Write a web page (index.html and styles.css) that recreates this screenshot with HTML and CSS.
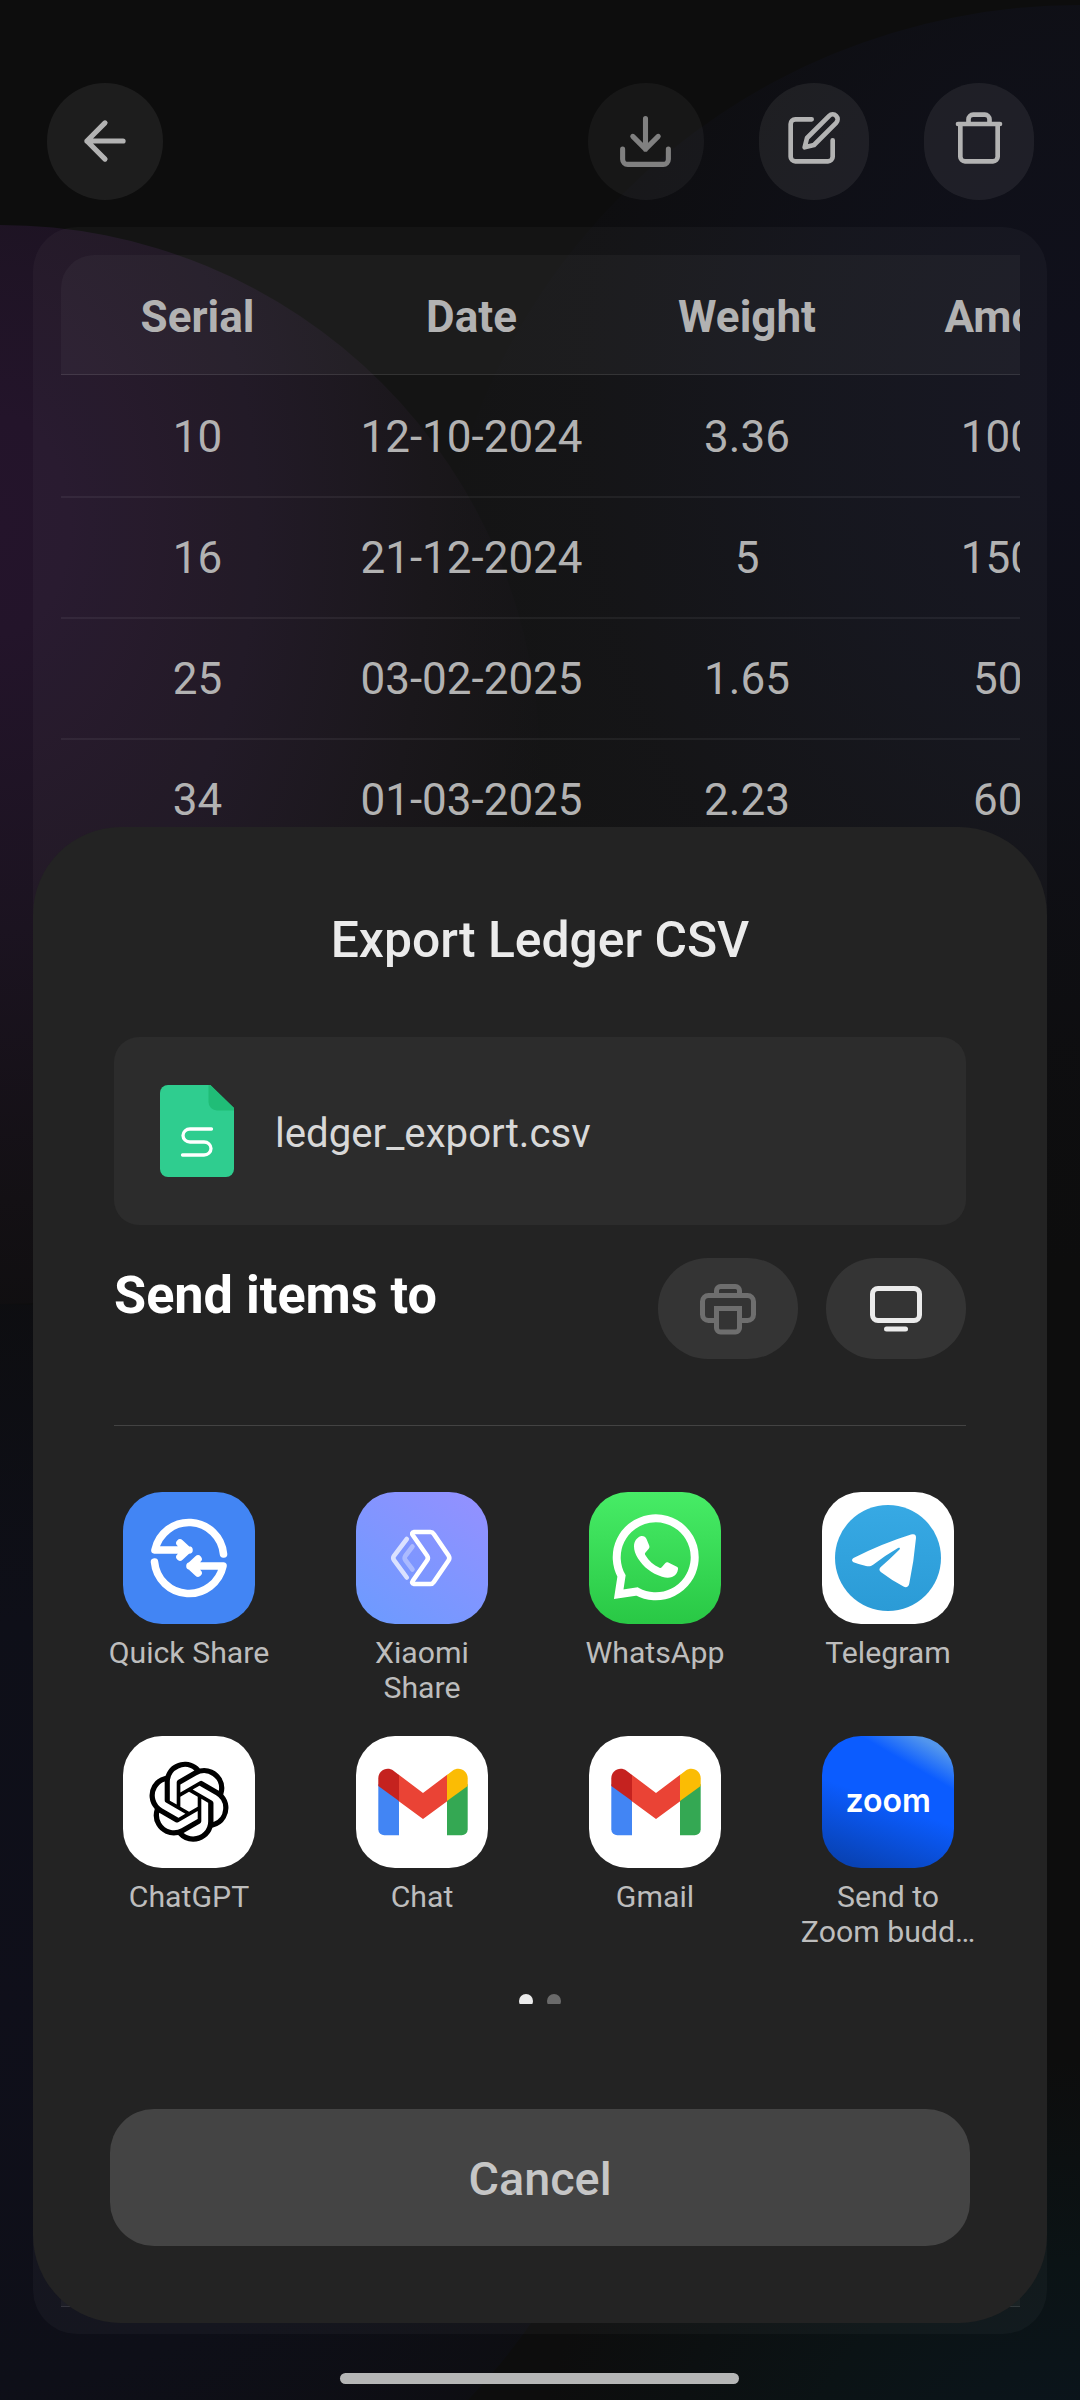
FILE: index.html
```html
<!DOCTYPE html>
<html lang="en">
<head>
<meta charset="utf-8">
<title>Export Ledger CSV</title>
<link rel="stylesheet" href="styles.css">
</head>
<body>
<div class="screen">
  <div class="glow glow-purple"></div>
  <div class="glow glow-blue"></div>
  <div class="glow glow-indigo"></div>
  <div class="glow glow-teal"></div>

  <header class="toolbar">
    <button class="round back" aria-label="Back">
      <svg width="62" height="62" viewBox="0 0 24 24"><path d="M19 12H5M12 19l-7-7 7-7"/></svg>
    </button>
    <button class="round download" aria-label="Download">
      <svg width="61" height="61" viewBox="0 0 24 24"><path d="M21 15v4a2 2 0 0 1-2 2H5a2 2 0 0 1-2-2v-4M7 10l5 5 5-5M12 15V3"/></svg>
    </button>
    <button class="round narrow" aria-label="Edit">
      <svg width="56" height="56" viewBox="0 0 24 24"><path d="M11 4H4a2 2 0 0 0-2 2v14a2 2 0 0 0 2 2h14a2 2 0 0 0 2-2v-7"/><path d="M18.500 2.500a2.121 2.121 0 0 1 3 3L12 15l-4 1 1-4 9.500-9.500z"/></svg>
    </button>
    <button class="round narrow" aria-label="Delete">
      <svg width="56" height="56" viewBox="0 0 24 24"><path d="M3 6h18M20 6v14a2 2 0 0 1-2 2H6a2 2 0 0 1-2-2V6M7.500 6V4a2 2 0 0 1 2-2h5a2 2 0 0 1 2 2v2"/></svg>
    </button>
  </header>

  <main class="card">
    <div class="table">
      <div class="row head"><span>Serial</span><span>Date</span><span>Weight</span><span>Amount</span></div>
      <div class="row"><span>10</span><span>12-10-2024</span><span>3.36</span><span>10000</span></div>
      <div class="row"><span>16</span><span>21-12-2024</span><span>5</span><span>15000</span></div>
      <div class="row"><span>25</span><span>03-02-2025</span><span>1.65</span><span>5000</span></div>
      <div class="row"><span>34</span><span>01-03-2025</span><span>2.23</span><span>6000</span></div>
      <div class="foot"></div>
    </div>
  </main>

  <section class="sheet">
    <h1 class="title">Export Ledger CSV</h1>
    <div class="file">
      <svg width="74" height="92" viewBox="0 0 74 92">
        <path d="M8 0H50L74 23V84a8 8 0 0 1-8 8H8a8 8 0 0 1-8-8V8a8 8 0 0 1 8-8z" fill="#2fcd8f"/>
        <path d="M48.500 0H50.500L74 23V25.500H57a8.500 8.500 0 0 1-8.500-8.500z" fill="#20bd77"/>
        <path d="M51.500 44H30a7 6.500 0 0 0 0 13H44a7 6.500 0 0 1 0 13H22.500" fill="none" stroke="#fff" stroke-width="3.300" stroke-linecap="round"/>
      </svg>
      <span class="file-name">ledger_export.csv</span>
    </div>
    <div class="send">
      <h2 class="send-title">Send items to</h2>
      <button class="pill" aria-label="Print">
        <svg width="56" height="52" viewBox="0 0 56 52" fill="none" stroke="#6e6e6e" stroke-width="5">
          <path d="M16.500 12V7.500a4 4 0 0 1 4-4h15a4 4 0 0 1 4 4V12"/>
          <path d="M14 37.500H8.500a6 6 0 0 1-6-6v-13a6 6 0 0 1 6-6h39a6 6 0 0 1 6 6v13a6 6 0 0 1-6 6H42"/>
          <path d="M16.500 25.500h23V45a4 4 0 0 1-4 4h-15a4 4 0 0 1-4-4z"/>
        </svg>
      </button>
      <button class="pill" aria-label="Cast to screen">
        <svg width="52" height="46" viewBox="0 0 52 46" fill="none" stroke="#ebebeb" stroke-width="5">
          <rect x="2.500" y="2.500" width="47" height="32" rx="5.500"/>
          <path d="M16.500 43h19" stroke-linecap="round"/>
        </svg>
      </button>
    </div>

    <div class="apps">
      <div class="app">
        <svg class="icon quick" viewBox="0 0 132 132" fill="none" stroke="#fff" stroke-width="7.600" stroke-linecap="round" stroke-linejoin="round">
          <path d="M100.500 62A34.700 34.700 0 0 0 32 58H66M57 51L64.500 58L57 65"/>
          <path d="M31.500 70A34.700 34.700 0 0 0 100 74H67M75 67L67.500 74L75 81"/>
        </svg>
        <span class="label">Quick Share</span>
      </div>
      <div class="app">
        <svg class="icon xiaomi" viewBox="0 0 132 132" fill="none" stroke="#fff" stroke-width="4.600" stroke-linecap="round" stroke-linejoin="round">
          <path d="M58 40H74.500Q76.500 40 77.800 42L92.500 63.500Q94.200 66 92.500 68.500L77.800 90Q76.500 92 74.500 92H58Q55 91.500 57 88.500L71 68.500Q72.800 66 71 63.500L57 43.500Q55 40.500 58 40z"/>
          <path d="M50.800 47L38 63.800Q36.500 66 38 68.200L50.800 85.500" opacity=".72"/>
          <path d="M56.500 54.500L49.300 64Q48 66 49.300 68L56.500 77.500" opacity=".35"/>
        </svg>
        <span class="label">Xiaomi Share</span>
      </div>
      <div class="app">
        <svg class="icon whatsapp" viewBox="0 0 132 132">
          <path d="M32.500 84A39 39 0 1 1 48 99.500L29.700 102.300z" fill="none" stroke="#fff" stroke-width="8"/>
          <path d="M45 54.500C45 49 48 45.500 51.500 44.200C54.500 43.700 56.500 44.700 57.500 47L60.200 53.500C60.700 55 60.400 56 59.500 57L56.500 60.500C55.700 61.500 55.800 62.200 56.300 63C60 69 64.500 73.200 70.500 75.800C71.500 76.200 72.100 76 72.700 75.300L76.200 71.200C77 70.200 78 70 79.300 70.500L87.300 74.500C88.800 75.200 89.200 75.800 89 77.300C88.600 81 86.500 83.500 83 85C80 86 77 86 73 84.700C62.500 81.500 54.500 75 49 66.500C46.300 62.300 45 58 45 54.500z" fill="#fff"/>
        </svg>
        <span class="label">WhatsApp</span>
      </div>
      <div class="app">
        <svg class="icon telegram" viewBox="0 0 132 132">
          <defs><linearGradient id="tg" x1="0" y1="0" x2="0" y2="1"><stop offset="0" stop-color="#37a9e4"/><stop offset="1" stop-color="#2b9bd6"/></linearGradient></defs>
          <circle cx="66" cy="66" r="53" fill="url(#tg)"/>
          <path d="M31.500 66Q60 51.500 89 42.500C92.500 41.500 94.300 42.500 94 46Q92 69 87.300 91.500C86.500 95 84.300 96.200 81.500 94.600Q70 88.500 58.800 80C57 78.500 57 77 58.500 75.300Q68 67 77.500 57.500C78.500 56 77.500 55.300 76 56Q63 63.500 51.500 72.500C49 74.500 46.500 74.600 44 74Q37 72.500 31.500 70.300C29.500 69.300 29.500 67.200 31.500 66z" fill="#fff"/>
        </svg>
        <span class="label">Telegram</span>
      </div>
      <div class="app">
        <svg class="icon" viewBox="0 0 132 132">
          <path transform="translate(26 25.700) scale(3.333)" d="M22.2819 9.8211a5.9847 5.9847 0 0 0-.5157-4.9108 6.0462 6.0462 0 0 0-6.5098-2.9A6.0651 6.0651 0 0 0 4.9807 4.1818a5.9847 5.9847 0 0 0-3.9977 2.9 6.0462 6.0462 0 0 0 .7427 7.0966 5.98 5.98 0 0 0 .511 4.9107 6.051 6.051 0 0 0 6.5146 2.9001A5.9847 5.9847 0 0 0 13.2599 24a6.0557 6.0557 0 0 0 5.7718-4.2058 5.9894 5.9894 0 0 0 3.9977-2.9001 6.0557 6.0557 0 0 0-.7475-7.0729zm-9.022 12.6081a4.4755 4.4755 0 0 1-2.8764-1.0408l.1419-.0804 4.7783-2.7582a.7948.7948 0 0 0 .3927-.6813v-6.7369l2.02 1.1686a.071.071 0 0 1 .038.052v5.5826a4.504 4.504 0 0 1-4.4945 4.4944zm-9.6607-4.1254a4.4708 4.4708 0 0 1-.5346-3.0137l.142.0852 4.783 2.7582a.7712.7712 0 0 0 .7806 0l5.8428-3.3685v2.3324a.0804.0804 0 0 1-.0332.0615L9.74 19.9502a4.4992 4.4992 0 0 1-6.1408-1.6464zM2.3408 7.8956a4.485 4.485 0 0 1 2.3655-1.9728V11.6a.7664.7664 0 0 0 .3879.6765l5.8144 3.3543-2.0201 1.1685a.0757.0757 0 0 1-.071 0l-4.8303-2.7865A4.504 4.504 0 0 1 2.3408 7.872zm16.5963 3.8558L13.1038 8.364 15.1192 7.2a.0757.0757 0 0 1 .071 0l4.8303 2.7913a4.4944 4.4944 0 0 1-.6765 8.1042v-5.6772a.79.79 0 0 0-.407-.667zm2.0107-3.0231l-.142-.0852-4.7735-2.7818a.7759.7759 0 0 0-.7854 0L9.409 9.2297V6.8974a.0662.0662 0 0 1 .0284-.0615l4.8303-2.7866a4.4992 4.4992 0 0 1 6.6802 4.66zM8.3065 12.863l-2.02-1.1638a.0804.0804 0 0 1-.038-.0567V6.0742a4.4992 4.4992 0 0 1 7.3757-3.4537l-.142.0805L8.704 5.459a.7948.7948 0 0 0-.3927.6813zm1.0976-2.3654l2.602-1.4998 2.6069 1.4998v2.9994l-2.5974 1.4997-2.6067-1.4997Z"/>
        </svg>
        <span class="label">ChatGPT</span>
      </div>
      <div class="app">
        <svg class="icon" viewBox="0 0 132 132">
          <g id="gmail">
            <path d="M22.300 48L43 62V99.300H28.300a6 6 0 0 1-6-6z" fill="#4285f4"/>
            <path d="M111.700 48L91 62V99.300H105.700a6 6 0 0 0 6-6z" fill="#34a853"/>
            <path d="M42.500 38.500L67 57L91.500 38.500V65L67 83L42.500 65z" fill="#ea4335"/>
            <path d="M43 38.900L37.500 34.800C31 30 22.300 34.500 22.300 42.300V50L43 65z" fill="#c5221f"/>
            <path d="M91 38.900L96.500 34.800C103 30 111.700 34.500 111.700 42.300V50L91 65z" fill="#fbbc04"/>
          </g>
        </svg>
        <span class="label">Chat</span>
      </div>
      <div class="app">
        <svg class="icon" viewBox="0 0 132 132"><use href="#gmail"/></svg>
        <span class="label">Gmail</span>
      </div>
      <div class="app">
        <svg class="icon zoom" viewBox="0 0 132 132"><text class="zoom-mark" x="23.500" y="75.500" textLength="85.500" lengthAdjust="spacingAndGlyphs">zoom</text></svg>
        <span class="label">Send to<br>Zoom budd…</span>
      </div>
    </div>

    <div class="dots"><i class="dot active"></i><i class="dot"></i></div>
    <button class="cancel">Cancel</button>
  </section>
  <div class="home-bar"></div>
</div>
</body>
</html>
```
FILE: styles.css
```css
* { box-sizing: border-box; }

body {
  margin: 0;
  background: #0d0d0d;
  font-family: Roboto, "Liberation Sans", sans-serif;
}

button {
  border: 0;
  padding: 0;
  font: inherit;
}

.screen {
  position: relative;
  width: 1080px;
  height: 2400px;
  overflow: hidden;
  background: #0d0d0d;
}

/* coloured background blobs */
.glow {
  position: absolute;
  border-radius: 50%;
}
.glow-purple {
  left: -540px;
  top: 225px;
  width: 1080px;
  height: 1079px;
  background: radial-gradient(ellipse 570px 900px at 50% 300px, #24142b 0%, #23142a 12%, #1b1320 45%, #131014 75%, #0d0d0d 100%);
}
.glow-blue {
  left: 432px;
  top: 5px;
  width: 1296px;
  height: 1296px;
  background: radial-gradient(ellipse 660px 860px at 50% 400px, rgba(17, 17, 32, .8) 0%, rgba(16, 17, 28, .7) 40%, rgba(15, 15, 20, .4) 75%, rgba(13, 13, 13, 0) 100%);
}
.glow-indigo {
  left: -648px;
  top: 1304px;
  width: 1296px;
  height: 1296px;
  background: radial-gradient(circle at 50% 54%, #0f0f1a 0%, #0e0f18 40%, #0d0d0e 85%, #0d0d0d 100%);
}
.glow-teal {
  left: 540px;
  top: 2060px;
  width: 1080px;
  height: 800px;
  background: radial-gradient(ellipse closest-side, #0b151d 0%, #0b1315 50%, #0d0d0d 100%);
}

.toolbar {
  position: relative;
  display: flex;
  gap: 55px;
  height: 227px;
  padding: 83px 46px 0 47px;
}
.round {
  display: flex;
  justify-content: center;
  align-items: center;
  width: 116px;
  height: 117px;
  padding: 0 1px 1px 0;
  border-radius: 58px;
  background: rgba(255, 255, 255, .065);
}
.round svg {
  flex: none;
  fill: none;
  stroke: #b3b3b3;
  stroke-width: 2;
  stroke-linecap: round;
  stroke-linejoin: round;
}
.back { margin-right: auto; }
.download { background: rgba(255, 255, 255, .045); }
.download svg { stroke: #808080; }
.narrow {
  width: 110px;
  padding: 0 0 7px;
}

.card {
  position: relative;
  width: 1014px;
  height: 2107px;
  margin-left: 33px;
  padding: 28px 27px 28px 28px;
  border-radius: 44px;
  background: rgba(255, 255, 255, .033);
}
.table {
  display: flex;
  flex-direction: column;
  height: 2052px;
  overflow: hidden;
  border-radius: 33px 0 0 0;
}
.row {
  display: grid;
  grid-template-columns: 273px 275px 276px 275px;
  align-items: center;
  flex: none;
  width: 1100px;
  height: 121px;
  border-bottom: 2px solid rgba(255, 255, 255, .06);
  color: #b2b2b2;
  font-size: 44px;
  text-align: center;
}
.row.head {
  height: 120px;
  margin-bottom: 2px;
  padding-top: 4px;
  border-bottom: 1px solid rgba(255, 255, 255, .1);
  background: rgba(255, 255, 255, .035);
  font-weight: 700;
}
.foot {
  height: 121px;
  margin-top: auto;
  border-bottom: 1px solid rgba(255, 255, 255, .1);
  background: rgba(255, 255, 255, .035);
}

.sheet {
  position: absolute;
  left: 33px;
  top: 827px;
  width: 1014px;
  height: 1496px;
  padding: 0 81px;
  border-radius: 88px;
  background: #232323;
}
.title {
  margin: 0;
  padding-top: 83px;
  height: 210px;
  color: #ebebeb;
  font-size: 49.8px;
  font-weight: 500;
  line-height: 60px;
  text-align: center;
}
.file {
  display: flex;
  align-items: center;
  gap: 41px;
  height: 188px;
  padding-left: 46px;
  border-radius: 25px;
  background: #2c2c2c;
}
.file-name {
  padding-top: 4px;
  color: #d8d8d8;
  font-size: 40.2px;
}
.send {
  display: flex;
  gap: 28px;
  height: 201px;
  padding-top: 33px;
  border-bottom: 1px solid #434343;
}
.send-title {
  flex: 1;
  margin: 7px 0 0;
  color: #fff;
  font-size: 52.2px;
  font-weight: 700;
  line-height: 62px;
}
.pill {
  display: flex;
  justify-content: center;
  align-items: center;
  width: 140px;
  height: 101px;
  border-radius: 50px;
  background: #343434;
}

.apps {
  display: grid;
  grid-template-columns: repeat(4, 233px);
  grid-auto-rows: 244px;
  justify-content: center;
  margin: 66px -39px 0 -42px;
}
.app {
  display: flex;
  flex-direction: column;
  align-items: center;
}
.icon {
  width: 132px;
  height: 132px;
  border-radius: 39px;
  background: #fff;
}
.quick { background: #4285f4; }
.xiaomi { background: linear-gradient(35deg, #6b9bff, #9590ff); }
.whatsapp { background: linear-gradient(#47ec66, #29c845); }
.zoom {
  background:
    linear-gradient(30deg, transparent 74%, rgba(90, 156, 235, .9) 90%),
    linear-gradient(20deg, #0842b4 8%, #0b5cff 50%);
}
.zoom-mark {
  fill: #fff;
  font-family: Inter, sans-serif;
  font-size: 33px;
  font-weight: 600;
}
.label {
  width: 176px;
  margin-top: 11px;
  color: #bdbdbd;
  font-size: 30.25px;
  line-height: 35px;
  text-align: center;
}
.app:nth-child(2) .label { width: 130px; }

.dots {
  display: flex;
  justify-content: center;
  gap: 14px;
  height: 10px;
  margin-top: 14px;
  overflow: hidden;
}
.dot {
  width: 14px;
  height: 14px;
  border-radius: 50%;
  background: #6a6a6a;
}
.dot.active { background: #ebebeb; }

.cancel {
  display: block;
  width: 860px;
  height: 137px;
  margin: 105px -4px 0;
  padding-top: 2px;
  border-radius: 44px;
  background: #444;
  color: #c6c6c6;
  font-size: 46.75px;
  font-weight: 500;
}
.home-bar {
  position: absolute;
  left: 340px;
  top: 2373px;
  width: 399px;
  height: 11px;
  border-radius: 6px;
  background: #b5b6b6;
}
```
